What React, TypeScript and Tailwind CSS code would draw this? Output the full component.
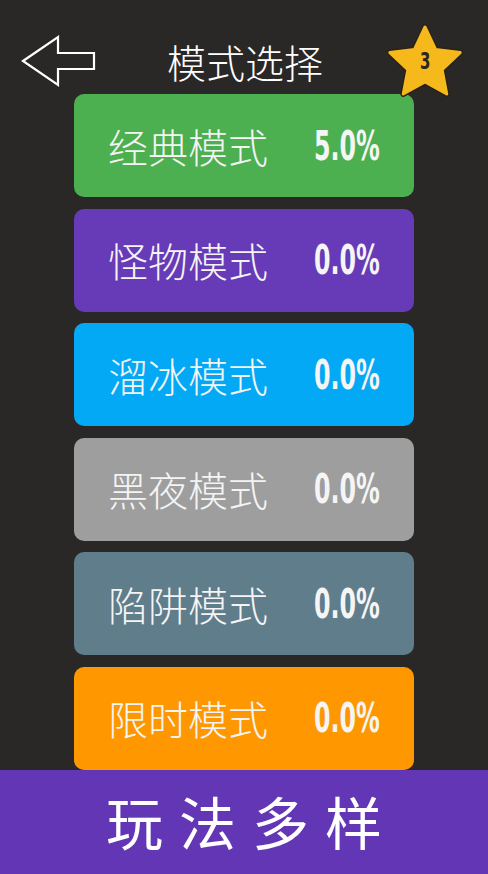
import React from "react";

const modes = [
  { name: "经典模式", pct: "5.0%", bg: "bg-[#4caf50]" },
  { name: "怪物模式", pct: "0.0%", bg: "bg-[#673ab7]" },
  { name: "溜冰模式", pct: "0.0%", bg: "bg-[#03a9f4]" },
  { name: "黑夜模式", pct: "0.0%", bg: "bg-[#9e9e9e]" },
  { name: "陷阱模式", pct: "0.0%", bg: "bg-[#607d8b]" },
  { name: "限时模式", pct: "0.0%", bg: "bg-[#ff9800]" },
];

const cjk = { fontFamily: '"Noto Sans CJK SC", sans-serif' };
const cond = { fontFamily: '"DejaVu Sans Condensed", "DejaVu Sans", sans-serif' };

function starPath(cx: number, cy: number, R: number, r: number) {
  const pts: string[] = [];
  for (let i = 0; i < 10; i++) {
    const rad = i % 2 === 0 ? R : r;
    const a = -Math.PI / 2 + (i * Math.PI) / 5;
    pts.push(`${(cx + rad * Math.cos(a)).toFixed(2)},${(cy + rad * Math.sin(a)).toFixed(2)}`);
  }
  return pts.join(" ");
}

export default function App() {
  return (
    <div className="w-[488px] h-[874px] bg-[#2a2827] flex flex-col overflow-hidden" style={cjk}>
      <div className="h-[94px] flex items-center relative shrink-0">
        <svg className="absolute left-[20px] top-[34px]" width="78" height="54" viewBox="20 34 78 54">
          <polygon points="23,61 58,37 58,53 94,53 94,69 58,69 58,85" fill="none" stroke="white" strokeWidth="2.2" strokeLinejoin="miter" />
        </svg>
        <div className="w-full text-center text-white text-[39px] font-light leading-none pt-[28px] pl-[2px]" style={cjk}>模式选择</div>
        <div className="absolute left-[386px] top-[22px] w-[78px] h-[76px]">
          <svg width="78" height="76" viewBox="386 22 78 76">
            <polygon points={starPath(425, 64, 37, 18)} fill="#f6b91c" stroke="#2a2117" strokeWidth="6" strokeLinejoin="round" />
            <polygon points={starPath(425, 64, 37, 18)} fill="#f6b91c" stroke="#f6b91c" strokeWidth="3" strokeLinejoin="round" />
          </svg>
          <div className="absolute inset-0 flex items-center justify-center pt-[2px] pl-[1px]">
            <span className="text-[#2b2622] text-[23px] font-bold leading-none inline-block scale-x-[0.72]" style={cond}>3</span>
          </div>
        </div>
      </div>
      <div className="flex flex-col gap-[11.6px] px-[74px] shrink-0">
        {modes.map((m) => (
          <div key={m.name} className={`${m.bg} h-[103px] rounded-[10px] flex items-center pl-[34px] pr-[34px]`}>
            <span className="text-[#f4f4f4] text-[40px] font-light leading-none" style={cjk}>{m.name}</span>
            <span className="ml-auto text-[#f5f5f5] text-[40px] font-bold leading-none inline-block scale-x-[0.66] origin-right" style={cond}>{m.pct}</span>
          </div>
        ))}
      </div>
      <div className="flex-1 bg-[#6236b4] flex items-center justify-center">
        <span className="text-white text-[57px] leading-none tracking-[16px] pl-[16px] pb-[2px]" style={cjk}>玩法多样</span>
      </div>
    </div>
  );
}
